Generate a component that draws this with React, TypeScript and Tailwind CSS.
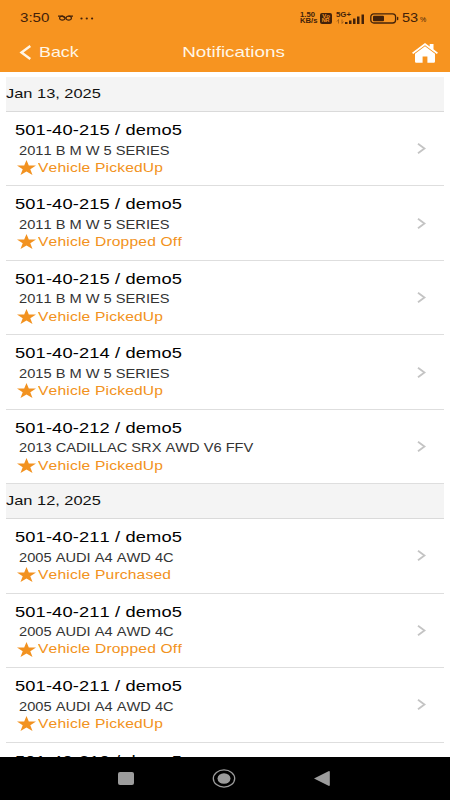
interface Notice {
  id:       string
  vehicle?: string
  status?:  string
}

interface DayGroup {
  date:  string
  items: Notice[]
}

const GROUPS: DayGroup[] = [
  {
    date: 'Jan 13, 2025',
    items: [
      { id: '501-40-215 / demo5', vehicle: '2011 B M W 5 SERIES', status: 'Vehicle PickedUp' },
      { id: '501-40-215 / demo5', vehicle: '2011 B M W 5 SERIES', status: 'Vehicle Dropped Off' },
      { id: '501-40-215 / demo5', vehicle: '2011 B M W 5 SERIES', status: 'Vehicle PickedUp' },
      { id: '501-40-214 / demo5', vehicle: '2015 B M W 5 SERIES', status: 'Vehicle PickedUp' },
      { id: '501-40-212 / demo5', vehicle: '2013 CADILLAC SRX AWD V6 FFV', status: 'Vehicle PickedUp' },
    ],
  },
  {
    date: 'Jan 12, 2025',
    items: [
      { id: '501-40-211 / demo5', vehicle: '2005 AUDI A4 AWD 4C', status: 'Vehicle Purchased' },
      { id: '501-40-211 / demo5', vehicle: '2005 AUDI A4 AWD 4C', status: 'Vehicle Dropped Off' },
      { id: '501-40-211 / demo5', vehicle: '2005 AUDI A4 AWD 4C', status: 'Vehicle PickedUp' },
      { id: '501-40-210 / demo5' },
    ],
  },
]

function StatusBar() {
  return (
    <div className="flex h-9 items-center pl-5 text-[#43220a]">
      <span className="w-[38px] origin-left scale-x-[1.12] text-[13.5px]">3:50</span>
      <svg className="h-[6px] w-[15px]" viewBox="0 0 15 6" fill="none" stroke="currentColor" strokeWidth="1.2">
        <ellipse cx="4.300" cy="3.200" rx="2.700" ry="2" />
        <ellipse cx="10.700" cy="3.200" rx="2.700" ry="2" />
        <path d="M0 1.200h4.500L7.500 3.200M10.500 1.200H15" />
      </svg>
      <svg className="ml-[7px] h-[3px] w-[14px]" viewBox="0 0 14 3" fill="currentColor">
        <circle cx="1.500" cy="1.500" r="1.100" />
        <circle cx="6.800" cy="1.500" r="1.100" />
        <circle cx="12.100" cy="1.500" r="1.100" />
      </svg>

      {/* Network speed, VoNR, signal, battery */}
      <div className="ml-auto flex h-9 items-center">
        <div className="w-[20px] origin-left scale-x-[1.18] text-[6.500px] leading-[6.500px] font-bold">
          <div>1.50</div>
          <div>KB/s</div>
        </div>
        <div className="flex h-[11px] w-[12px] flex-col items-center justify-center rounded-[2px] bg-[#43220a] text-[5px] leading-[4.500px] font-bold text-[#f79420]">
          <span className="scale-x-[1.200]">Vo</span>
          <span className="scale-x-[1.100]">NR</span>
        </div>
        <svg className="ml-[4px] h-[14px] w-[29px]" viewBox="0 0 29 14" fill="currentColor">
          <text x="0" y="6.200" fontSize="6.500" fontWeight="bold" textLength="15" lengthAdjust="spacingAndGlyphs">5G+</text>
          <path d="M1 10.500l1.500-2v4M6 8.500v4l1.500-2" fill="none" stroke="currentColor" strokeWidth=".6" opacity=".7" />
          <path d="M9 11h2.500v2H9zM13 9.500h2.500V13H13zM17 7.500h2.500V13H17zM21 5.500h2.500V13H21zM25.500 3.500H28V13h-2.500z" />
        </svg>
        <svg className="ml-[5px] h-[11px] w-[29px]" viewBox="0 0 29 11" fill="none">
          <rect x=".8" y=".8" width="24.800" height="9.200" rx="3" stroke="currentColor" strokeWidth="1.300" />
          <rect x="3" y="2.800" width="11" height="5.400" rx="1" fill="currentColor" />
          <rect x="27" y="3.800" width="1.300" height="3.400" rx=".6" fill="currentColor" />
        </svg>
        <div className="ml-[3px] flex w-[48px] items-baseline">
          <span className="w-[17px] origin-left scale-x-[1.120] text-[13px]">53</span>
          <span className="ml-px text-[7px]">%</span>
        </div>
      </div>
    </div>
  )
}

function TitleBar() {
  return (
    <div className="grid h-[33px] grid-cols-3 items-center text-[#fff6e6]">
      <div className="flex items-center pl-[19px]">
        <svg className="h-[15px] w-[13px]" viewBox="0 0 13 15" fill="none" stroke="currentColor" strokeWidth="2.400">
          <path d="M11.300 1L2.500 7.500l8.800 6.500" />
        </svg>
        <span className="ml-[7px] origin-left scale-x-[1.230] text-[14.500px]">Back</span>
      </div>
      <h1 className="flex justify-center pl-[17px] text-[14.500px]">
        <span className="scale-x-[1.300]">Notifications</span>
      </h1>
      <svg className="mr-3 h-[20px] w-[26px] justify-self-end" viewBox="0 0 26 20" fill="white">
        <path d="M13 0L0 9.700l1.200 1.300L13 2.300 24.800 11 26 9.700l-4.500-3.400V1h-3.800v2.600z" />
        <path d="M13 3.300L3 10.800v7.400c0 1 .6 1.600 1.600 1.600h6v-6.300h4.800v6.300h6c1 0 1.600-.6 1.600-1.600v-7.400z" />
      </svg>
    </div>
  )
}

function NoticeRow({ id, vehicle, status }: Notice) {
  return (
    <li className="flex h-[74.450px] shrink-0 items-center justify-between border-b border-[#dedede] pr-[18px] pl-[9px] whitespace-nowrap">
      <div className="h-full pt-2">
        <div className="origin-left scale-x-[1.220] text-[15px] leading-5 tracking-[0.100px] text-black">{id}</div>
        {vehicle && (
          <div className="mt-[2.500px] ml-1 origin-left scale-x-[1.220] text-[12px] leading-[17px] text-[#333]">{vehicle}</div>
        )}
        {status && (
          <div className="ml-0.5 flex h-4 items-center text-[#f29220]">
            <svg className="h-[15px] w-[19px]" viewBox="0 0 19 15" fill="currentColor">
              <path d="M9.500 0l2.300 5.500H19l-5.700 3.700 2.200 5.800-6-3.500-6 3.500 2.200-5.800L0 5.500h7.200z" />
            </svg>
            <span className="ml-0.5 origin-left scale-x-[1.200] text-[13px] tracking-[0.150px]">{status}</span>
          </div>
        )}
      </div>
      {status && (
        <svg className="h-[11px] w-[9px]" viewBox="0 0 9 11" fill="none" stroke="#c4c4c4" strokeWidth="1.900">
          <path d="M1 .8l6.500 4.700L1 10.200" />
        </svg>
      )}
    </li>
  )
}

function SystemNav() {
  return (
    <nav className="flex h-[43px] shrink-0 items-center justify-center bg-black pr-[3px] text-[#9c9c9c]">
      <div className="h-[13px] w-4 rounded-[2px] bg-[#9c9c9c]" />
      <svg className="ml-[78px] h-[19px] w-[24px]" viewBox="0 0 24 19" fill="none">
        <ellipse cx="12" cy="9.500" rx="10.700" ry="8.600" stroke="currentColor" strokeWidth="1.300" />
        <ellipse cx="12" cy="9.500" rx="6.500" ry="5.300" fill="currentColor" />
      </svg>
      <svg className="ml-[78px] h-[15px] w-4" viewBox="0 0 16 15" fill="currentColor">
        <path d="M0 7.500L15 0q.8 0 .8 1v13q0 1-.8 1z" />
      </svg>
    </nav>
  )
}

export default function App() {
  return (
    <div className="flex h-[800px] w-[450px] flex-col overflow-hidden bg-white font-['Liberation_Sans',Arial,sans-serif] [font-kerning:none]">
      <header className="h-[72px] shrink-0 bg-[#f79420]">
        <StatusBar />
        <TitleBar />
      </header>

      <main className="flex min-h-0 flex-1 flex-col overflow-hidden px-1.5 pt-[5px]">
        {GROUPS.map(group => (
          <section key={group.date} className="shrink-0">
            <h2 className="flex h-[35px] items-center border-b border-[#dadada] bg-[#f4f4f4] text-[13.500px] text-[#111]">
              <span className="origin-left scale-x-[1.215]">{group.date}</span>
            </h2>
            <ul>
              {group.items.map((item, i) => (
                <NoticeRow key={i} {...item} />
              ))}
            </ul>
          </section>
        ))}
      </main>

      <SystemNav />
    </div>
  )
}
